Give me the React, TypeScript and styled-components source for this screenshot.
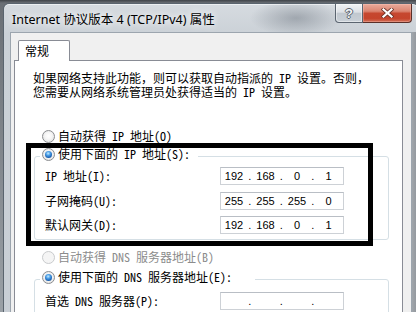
import React from "react";
import styled, { createGlobalStyle } from "styled-components";

const CJK = `"Noto Sans Mono CJK SC", "Noto Sans CJK SC", sans-serif`;

const GlobalStyle = createGlobalStyle`
  html, body { margin: 0; padding: 0; }
  body {
    width: 416px;
    height: 312px;
    overflow: hidden;
    background: #5f646a;
    font-family: ${CJK};
  }
  #root { width: 416px; height: 312px; overflow: hidden; }
`;

const Screen = styled.div`
  width: 416px;
  height: 312px;
  overflow: hidden;
  box-sizing: border-box;
  padding: 3px 0 0 3px;
  background: linear-gradient(180deg, #3f4348 0, #6a6f75 3px, #9aa0a6 100%);
`;

const Window = styled.div`
  width: 416px;
  box-sizing: border-box;
  border: 1px solid #5a646e;
  border-bottom: none;
  border-radius: 6px 6px 0 0;
  background:
    radial-gradient(ellipse 46px 18px at 292px 14px, rgba(120, 128, 138, 0.55), transparent),
    linear-gradient(180deg, #d6dbe0 0%, #cbd1d7 30px, #c7cdd4 100%);
  box-shadow: inset 0 1px 0 rgba(255, 255, 255, 0.55);
`;

const TitleBar = styled.div`
  display: flex;
  align-items: flex-start;
  height: 28px;
`;

const Title = styled.div`
  padding: 8px 0 0 8px;
  font-family: "Noto Sans", "Noto Sans CJK SC", sans-serif;
  font-size: 12.5px;
  line-height: 16px;
  color: #000;
  white-space: nowrap;
  text-shadow: 0 0 6px rgba(255, 255, 255, 0.95), 0 0 10px rgba(255, 255, 255, 0.8);
`;

const Caption = styled.div`
  display: flex;
  margin-left: auto;
  margin-right: 6px;
`;

const HelpButton = styled.div`
  width: 28px;
  height: 19px;
  box-sizing: border-box;
  border: 1px solid #5b6570;
  border-top: none;
  border-radius: 0 0 0 4px;
  background: linear-gradient(180deg, #f1f3f5 0%, #dde1e6 45%, #c1c8cf 52%, #c9d0d7 100%);
  box-shadow: inset 0 0 0 1px rgba(255, 255, 255, 0.45);
  display: grid;
  place-items: center;
  font-family: "Liberation Sans", sans-serif;
  font-weight: 700;
  font-size: 13px;
  line-height: 13px;
  color: #f4f6f8;
  text-shadow: 1px 0 #5a636d, -1px 0 #5a636d, 0 1px #5a636d, 0 -1px #5a636d;
`;

const CloseButton = styled.div`
  width: 49px;
  height: 19px;
  box-sizing: border-box;
  border: 1px solid #5a2f28;
  border-left: none;
  border-top: none;
  border-radius: 0 0 4px 0;
  background: linear-gradient(180deg, #e9ab9c 0%, #db8571 40%, #c6472f 52%, #c5442c 80%, #d27058 100%);
  box-shadow: inset 0 0 0 1px rgba(255, 200, 190, 0.35);
  display: grid;
  place-items: center;
`;

const Frame = styled.div`
  padding: 0 6px;
  background: linear-gradient(90deg, transparent calc(100% - 6px), #a1a6ab calc(100% - 6px), #8d9298 100%);
`;

const Panel = styled.div`
  background: #f0f0f0;
  border: 1px solid #9ca5ae;
  border-bottom: none;
  padding: 7px 8px 0 3px;
`;

const TabStrip = styled.div`
  display: flex;
  padding-left: 4px;
`;

const Tab = styled.div`
  position: relative;
  z-index: 1;
  width: 52px;
  height: 21px;
  box-sizing: border-box;
  margin-bottom: -1px;
  border: 1px solid #898c95;
  border-bottom: none;
  border-radius: 2px 2px 0 0;
  background: #fff;
  padding-left: 6px;
  font-family: "Noto Sans CJK SC", sans-serif;
  font-size: 12px;
  line-height: 19px;
  color: #000;
`;

const TabPage = styled.div`
  position: relative;
  height: 300px;
  border: 1px solid #898c95;
  background: #fff;
  padding: 10px 0 0 18px;
`;

const Intro = styled.p`
  margin: 0;
  font-size: 12px;
  line-height: 14px;
  color: #000;
  white-space: nowrap;
`;

const OptionRow = styled.div<{ $top?: number; $disabled?: boolean; $indent?: number }>`
  display: flex;
  align-items: center;
  gap: 3px;
  height: 14px;
  margin: ${(p) => p.$top ?? 0}px 0 0 ${(p) => p.$indent ?? 0}px;
  font-size: 12px;
  line-height: 14px;
  white-space: nowrap;
  color: ${(p) => (p.$disabled ? "#8c8c8c" : "#000")};
`;

const Radio = styled.span<{ $checked?: boolean; $disabled?: boolean }>`
  flex: none;
  width: 13px;
  height: 13px;
  box-sizing: border-box;
  border-radius: 50%;
  border: 1px solid ${(p) => (p.$disabled ? "#c9cbcd" : "#8b8d90")};
  background: ${(p) =>
    p.$disabled
      ? "#f5f5f5"
      : "radial-gradient(circle at 50% 45%, #ffffff 0%, #f6f6f6 40%, #d9dadb 100%)"};
  display: grid;
  place-items: center;
  &::after {
    content: "";
    display: ${(p) => (p.$checked ? "block" : "none")};
    width: 7px;
    height: 7px;
    border-radius: 50%;
    background: radial-gradient(circle at 45% 35%, #c4ecff 0%, #4a9de6 35%, #1a5fb0 70%, #0d3a72 100%);
  }
`;

const GroupBox = styled.fieldset<{ $top: number }>`
  margin: ${(p) => p.$top}px 0 0 1px;
  width: 355px;
  min-width: 0;
  box-sizing: border-box;
  border: 1px solid #d5dfe5;
  border-radius: 3px;
  padding: 0;
`;

const GroupLegend = styled.legend<{ $padRight: number }>`
  margin-left: 5px;
  padding: 0 ${(p) => p.$padRight}px 4px 2px;
  line-height: 14px;
`;

const FieldGrid = styled.div<{ $top: number }>`
  display: grid;
  grid-template-columns: 175px 124px;
  row-gap: 6.5px;
  align-items: center;
  padding: ${(p) => p.$top}px 0 5px 10px;
`;

const FieldLabel = styled.span`
  font-size: 12px;
  line-height: 14px;
  color: #000;
  white-space: nowrap;
`;

const IpField = styled.div`
  height: 18px;
  box-sizing: border-box;
  border: 1px solid #cdd1d6;
  border-top-color: #b9bec5;
  background: #fff;
  padding-left: 1px;
  display: grid;
  grid-template-columns: 24px 7.5px 24px 7.5px 24px 7.5px 24px;
  align-items: center;
  font-family: "Liberation Sans", Arial, sans-serif;
  font-size: 11px;
  line-height: 14px;
  color: #000;
`;

const Octet = styled.span`
  text-align: center;
`;

const Dot = styled.span`
  text-align: center;
`;

const Highlight = styled.div`
  position: absolute;
  left: 11px;
  top: 82px;
  width: 347px;
  height: 103px;
  box-sizing: border-box;
  border: 5px solid #000;
  pointer-events: none;
`;

function CloseGlyph() {
  return (
    <svg width="13" height="10" viewBox="0 0 13 10">
      <path d="M2.5 1.5 L10.5 8.5 M10.5 1.5 L2.5 8.5" stroke="#6b3328" strokeWidth="3.8" strokeLinecap="square" fill="none" />
      <path d="M2.5 1.5 L10.5 8.5 M10.5 1.5 L2.5 8.5" stroke="#ffffff" strokeWidth="2.2" strokeLinecap="square" fill="none" />
    </svg>
  );
}

function Address({ parts }: { parts: string[] }) {
  return (
    <IpField>
      <Octet>{parts[0]}</Octet>
      <Dot>.</Dot>
      <Octet>{parts[1]}</Octet>
      <Dot>.</Dot>
      <Octet>{parts[2]}</Octet>
      <Dot>.</Dot>
      <Octet>{parts[3]}</Octet>
    </IpField>
  );
}

const ipRows = [
  { label: "IP 地址(I):", value: ["192", "168", "0", "1"] },
  { label: "子网掩码(U):", value: ["255", "255", "255", "0"] },
  { label: "默认网关(D):", value: ["192", "168", "0", "1"] },
];

const dnsRows = [
  { label: "首选 DNS 服务器(P):", value: ["", "", "", ""] },
  { label: "备用 DNS 服务器(A):", value: ["", "", "", ""] },
];

export default function App() {
  return (
    <>
      <GlobalStyle />
      <Screen>
        <Window>
          <TitleBar>
            <Title>Internet 协议版本 4 (TCP/IPv4) 属性</Title>
            <Caption>
              <HelpButton>?</HelpButton>
              <CloseButton>
                <CloseGlyph />
              </CloseButton>
            </Caption>
          </TitleBar>
          <Frame>
            <Panel>
              <TabStrip>
                <Tab>常规</Tab>
              </TabStrip>
              <TabPage>
                <Intro>
                  如果网络支持此功能，则可以获取自动指派的 IP 设置。否则，
                  <br />
                  您需要从网络系统管理员处获得适当的 IP 设置。
                </Intro>

                <OptionRow $top={30} $indent={9}>
                  <Radio />
                  自动获得 IP 地址(O)
                </OptionRow>

                <GroupBox $top={4}>
                  <GroupLegend $padRight={8}>
                    <OptionRow>
                      <Radio $checked />
                      使用下面的 IP 地址(S):
                    </OptionRow>
                  </GroupLegend>
                  <FieldGrid $top={2}>
                    {ipRows.map((r) => (
                      <React.Fragment key={r.label}>
                        <FieldLabel>{r.label}</FieldLabel>
                        <Address parts={r.value} />
                      </React.Fragment>
                    ))}
                  </FieldGrid>
                </GroupBox>

                <OptionRow $top={10} $indent={9} $disabled>
                  <Radio $disabled />
                  自动获得 DNS 服务器地址(B)
                </OptionRow>

                <GroupBox $top={6}>
                  <GroupLegend $padRight={23}>
                    <OptionRow>
                      <Radio $checked />
                      使用下面的 DNS 服务器地址(E):
                    </OptionRow>
                  </GroupLegend>
                  <FieldGrid $top={4}>
                    {dnsRows.map((r) => (
                      <React.Fragment key={r.label}>
                        <FieldLabel>{r.label}</FieldLabel>
                        <Address parts={r.value} />
                      </React.Fragment>
                    ))}
                  </FieldGrid>
                </GroupBox>

                <Highlight />
              </TabPage>
            </Panel>
          </Frame>
        </Window>
      </Screen>
    </>
  );
}
